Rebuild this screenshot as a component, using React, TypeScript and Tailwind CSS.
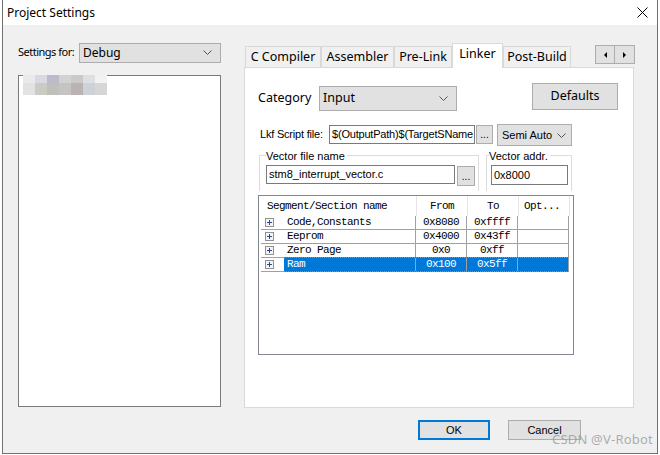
import React from 'react';

const ui = { fontFamily: '"Noto Sans", "Open Sans", sans-serif' };
const classic = { fontFamily: '"Liberation Sans", Arial, sans-serif' };
const mono = { fontFamily: '"Liberation Mono", "Courier New", monospace' };

const Chevron = () => (
  <svg width="9" height="5" viewBox="0 0 9 5" className="shrink-0">
    <polyline points="0.5,0.5 4.5,4.5 8.5,0.5" fill="none" stroke="#555" strokeWidth="1" />
  </svg>
);

const PlusBox = () => (
  <div className="w-[9px] h-[9px] border border-[#919191] bg-[#f4f4f4] flex items-center justify-center">
    <svg width="7" height="7" viewBox="0 0 7 7">
      <path d="M1 3.5h5M3.5 1v5" stroke="#2b4a8c" strokeWidth="1" />
    </svg>
  </div>
);

const rows = [
  { name: 'Code,Constants', from: '0x8080', to: '0xffff' },
  { name: 'Eeprom', from: '0x4000', to: '0x43ff' },
  { name: 'Zero Page', from: '0x0', to: '0xff' },
  { name: 'Ram', from: '0x100', to: '0x5ff', selected: true },
];

const tabs = [
  { label: 'C Compiler', w: 'w-[76px]' },
  { label: 'Assembler', w: 'w-[73px]' },
  { label: 'Pre-Link', w: 'w-[58px]' },
  { label: 'Linker', w: 'w-[51px]', active: true },
  { label: 'Post-Build', w: 'w-[68px]' },
];

const mosaic = [
  ['#e9e9ee', '#d9d9e1', '#bdbacd', '#d2d2d4', '#cacaca', '#dedfe2', '#f2f2f2'],
  ['#e2e2e2', '#cbcbc4', '#bfbfbb', '#c8c3c3', '#bbb3b3', '#ced2d6', '#d6d6d6'],
];

const App = () => {
  return (
    <div className="w-[660px] h-[455px] bg-white relative overflow-hidden">
      <div className="ml-[2px] w-[656px] h-[454px] border border-t-0 border-[#707070] flex flex-col">
        {/* title bar */}
        <div className="h-[25px] bg-white flex items-center pl-[4px] pr-[9px] shrink-0">
          <span className="text-[12px] text-black" style={ui}>Project Settings</span>
          <svg width="11" height="11" viewBox="0 0 11 11" className="ml-auto">
            <path d="M0.5 0.5L10.5 10.5M10.5 0.5L0.5 10.5" stroke="#000" strokeWidth="1" />
          </svg>
        </div>

        <div className="flex-1 bg-[#f0f0f0] flex flex-col">
          <div className="flex pt-[18px] pl-[15px]">
            {/* left column */}
            <div className="w-[203px] flex flex-col relative">
              <div className="h-[19px] flex items-center">
                <span className="text-[11px] tracking-[-0.5px] text-black whitespace-nowrap" style={ui}>Settings for:</span>
                <div className="ml-auto w-[142px] h-[20px] bg-[#e1e1e1] border border-[#adadad] flex items-center pl-[3px] pr-[8px]">
                  <span className="text-[12px] text-black" style={ui}>Debug</span>
                  <div className="ml-auto"><Chevron /></div>
                </div>
              </div>
              <div className="mt-[13px] h-[332px] bg-white border border-[#7a7a7a]" />
              <div className="absolute left-[-8px] top-[32px] flex flex-col blur-[0.6px]">
                {mosaic.map((r, i) => (
                  <div key={i} className={i === 0 ? 'flex h-[8px] pl-[13px]' : 'flex h-[12px] pl-[13px]'}>
                    {r.map((c, j) => (
                      <div key={j} className="w-[12px]" style={{ background: c }} />
                    ))}
                  </div>
                ))}
              </div>
            </div>

            {/* right column */}
            <div className="ml-[23px] w-[390px] flex flex-col">
              <div className="h-[24px] flex items-end pl-[1px] relative z-10">
                {tabs.map((t) =>
                  t.active ? (
                    <div
                      key={t.label}
                      className={`${t.w} h-[25px] mb-[-1px] bg-white border border-b-0 border-[#d9d9d9] flex items-start justify-center pt-[1px]`}
                    >
                      <span className="text-[12.5px] text-black" style={ui}>{t.label}</span>
                    </div>
                  ) : (
                    <div
                      key={t.label}
                      className={`${t.w} h-[21px] bg-[#f0f0f0] border border-b-0 border-[#d9d9d9] flex items-center justify-center`}
                    >
                      <span className="text-[12.5px] text-black" style={ui}>{t.label}</span>
                    </div>
                  )
                )}
                <div className="ml-auto self-start mt-[2px] mr-[-1px] flex h-[19px] border border-[#adadad] bg-[#e1e1e1]">
                  <div className="w-[19px] flex items-center justify-center border-r border-[#adadad]">
                    <svg width="3" height="6" viewBox="0 0 3 6"><path d="M3 0L0 3L3 6Z" fill="#000" /></svg>
                  </div>
                  <div className="w-[19px] flex items-center justify-center">
                    <svg width="3" height="6" viewBox="0 0 3 6"><path d="M0 0L3 3L0 6Z" fill="#000" /></svg>
                  </div>
                </div>
              </div>

              <div className="h-[341px] bg-white border border-[#d9d9d9] flex flex-col">
                {/* category */}
                <div className="mt-[15px] flex items-start pl-[13px]">
                  <div className="w-[61px] mt-[3px] h-[25px] flex items-center">
                    <span className="text-[12.5px] text-black" style={ui}>Category</span>
                  </div>
                  <div className="mt-[3px] w-[138px] h-[25px] bg-[#e1e1e1] border border-[#adadad] flex items-center pl-[3px] pr-[8px]">
                    <span className="text-[12.5px] text-black" style={ui}>Input</span>
                    <div className="ml-auto"><Chevron /></div>
                  </div>
                  <div className="ml-[75px] w-[86px] h-[27px] bg-[#e1e1e1] border border-[#adadad] flex items-center justify-center">
                    <span className="text-[12.5px] text-black" style={ui}>Defaults</span>
                  </div>
                </div>

                {/* lkf script */}
                <div className="mt-[13px] flex items-start pl-[15px]">
                  <div className="w-[69px] h-[21px] flex items-center">
                    <span className="text-[11px] text-black tracking-[-0.2px] whitespace-nowrap" style={classic}>Lkf Script file:</span>
                  </div>
                  <div className="mt-[1px] w-[146px] h-[19px] border border-[#7a7a7a] bg-white flex items-center pl-[2px] overflow-hidden whitespace-nowrap">
                    <span className="text-[11px] text-black tracking-[-0.2px]" style={classic}>$(OutputPath)$(TargetSName</span>
                  </div>
                  <div className="ml-[1px] mt-[1px] w-[17px] h-[19px] bg-[#e1e1e1] border border-[#adadad] flex items-end justify-center pb-[3px]">
                    <span className="text-[10px] leading-none text-black" style={classic}>...</span>
                  </div>
                  <div className="ml-[4px] w-[75px] h-[22px] bg-[#e1e1e1] border border-[#adadad] flex items-center pl-[4px] pr-[5px]">
                    <span className="text-[11px] text-black whitespace-nowrap" style={classic}>Semi Auto</span>
                    <div className="ml-auto"><Chevron /></div>
                  </div>
                </div>

                {/* vector groups */}
                <div className="mt-[9px] flex pl-[14px]">
                  <div className="relative w-[220px] h-[36px] border border-b-0 border-[#dcdcdc] pt-[9px] pl-[6px] flex items-start">
                    <span className="absolute left-[6px] top-[-8px] bg-white pr-[2px] text-[11px] text-black whitespace-nowrap" style={classic}>Vector file name</span>
                    <div className="w-[189px] h-[19px] border border-[#7a7a7a] bg-white flex items-center pl-[2px]">
                      <span className="text-[11px] text-black" style={classic}>stm8_interrupt_vector.c</span>
                    </div>
                    <div className="ml-[2px] mt-[1px] w-[18px] h-[20px] bg-[#e1e1e1] border border-[#adadad] flex items-end justify-center pb-[3px]">
                      <span className="text-[10px] leading-none text-black" style={classic}>...</span>
                    </div>
                  </div>
                  <div className="relative ml-[7px] w-[86px] h-[36px] border border-b-0 border-[#dcdcdc] pt-[9px] pl-[4px]">
                    <span className="absolute left-[2px] top-[-8px] bg-white pr-[2px] text-[11px] text-black whitespace-nowrap" style={classic}>Vector addr.</span>
                    <div className="w-[77px] h-[20px] border border-[#7a7a7a] bg-white flex items-center pl-[2px]">
                      <span className="text-[11px] text-black" style={classic}>0x8000</span>
                    </div>
                  </div>
                </div>

                {/* segment list */}
                <div className="mt-[4px] ml-[13px] w-[316px] h-[160px] border border-[#828790] bg-white flex flex-col" style={mono}>
                  <div className="h-[20px] flex items-center text-[11px] tracking-[-0.6px] text-black">
                    <div className="w-[158px] h-full pl-[8px] flex items-center border-r border-[#e5e5e5]">Segment/Section name</div>
                    <div className="w-[51px] h-full flex items-center justify-center border-r border-[#e5e5e5]">From</div>
                    <div className="w-[51px] h-full flex items-center justify-center border-r border-[#e5e5e5]">To</div>
                    <div className="w-[51px] h-full pl-[5px] flex items-center border-r border-[#e5e5e5]">Opt...</div>
                  </div>
                  {rows.map((r) => (
                    <div
                      key={r.name}
                      className="h-[14px] ml-[2px] w-[308px] flex border-b border-[#a0a0a0] text-[11px] tracking-[-0.6px] leading-none"
                    >
                      <div className="w-[23px] flex items-center pl-[4px]">
                        <PlusBox />
                      </div>
                      <div
                        className={
                          r.selected
                            ? 'flex-1 flex border-t border-b border-dotted border-[#e07b2a] mt-[-1px] h-[15px] bg-[#0078d7] text-white'
                            : 'flex-1 flex text-black'
                        }
                      >
                        <div className="w-[132px] flex items-center pl-[3px] border-r border-[#a0a0a0]">{r.name}</div>
                        <div className="w-[51px] flex items-center justify-center border-r border-[#a0a0a0]">{r.from}</div>
                        <div className="w-[51px] flex items-center justify-center border-r border-[#a0a0a0]">{r.to}</div>
                        <div className="w-[51px] border-r border-[#a0a0a0]" />
                      </div>
                    </div>
                  ))}
                </div>
              </div>
            </div>
          </div>

          {/* dialog buttons */}
          <div className="mt-[12px] flex justify-end gap-[18px] pr-[76px]">
            <div className="w-[72px] h-[20px] bg-[#e1e1e1] border-2 border-[#0078d7] flex items-center justify-center">
              <span className="text-[11px] text-black" style={classic}>OK</span>
            </div>
            <div className="w-[73px] h-[20px] bg-[#e1e1e1] border border-[#adadad] flex items-center justify-center">
              <span className="text-[11px] text-black" style={classic}>Cancel</span>
            </div>
          </div>
        </div>
      </div>

      <span
        className="absolute left-[552px] top-[430px] text-[13px] text-[#9a9a9a]/80 tracking-[0.2px]"
        style={{ fontFamily: '"Noto Sans", sans-serif' }}
      >
        CSDN @V-Robot
      </span>
    </div>
  );
};

export default App;
